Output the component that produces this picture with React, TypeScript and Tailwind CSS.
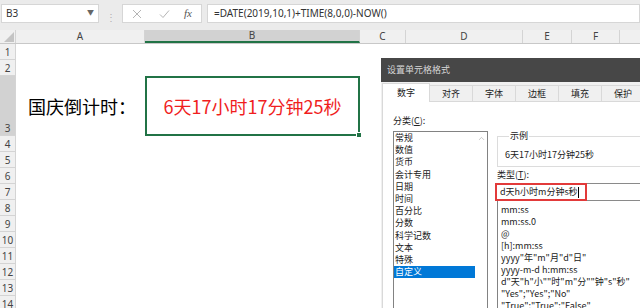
import { ChevronUp } from 'lucide-react';

const columns = [
  { id: 'A', w: 'w-[129px]', active: false },
  { id: 'B', w: 'w-[215px]', active: true },
  { id: 'C', w: 'w-[46px]', active: false },
  { id: 'D', w: 'w-[117px]', active: false },
  { id: 'E', w: 'w-[49px]', active: false },
  { id: 'F', w: 'w-[48px]', active: false },
  { id: 'G', w: 'w-[60px]', active: false },
];

const rowNums = [4, 5, 6, 7, 8, 9, 10, 11, 12, 13, 14];

const categories = ['常规', '数值', '货币', '会计专用', '日期', '时间', '百分比', '分数', '科学记数', '文本', '特殊', '自定义'];

const formats = [
  'mm:ss',
  'mm:ss.0',
  '@',
  '[h]:mm:ss',
  'yyyy"年"m"月"d"日"',
  'yyyy-m-d h:mm:ss',
  'd"天"h"小""时"m"分""钟"s"秒"',
  '"Yes";"Yes";"No"',
  '"True";"True";"False"',
];

const tabs = ['对齐', '字体', '边框', '填充', '保护'];

function RowHead({ n, active }: { n: number; active?: boolean }) {
  return (
    <div
      className={`w-[16px] shrink-0 flex items-end justify-center pb-[1px] text-[10px] leading-[12px] text-[#444] border-r border-b border-[#d4d4d4] ${
        active ? 'bg-[#d2d2d2]' : 'bg-[#f0f0f0]'
      }`}
    >
      {n}
    </div>
  );
}

export default function App() {
  return (
    <div className="relative w-[640px] h-[308px] overflow-hidden bg-white font-['Noto_Sans','Noto_Sans_CJK_SC',sans-serif]">
      {/* formula bar */}
      <div className="h-[30px] bg-[#ebebeb] pt-[4px] flex">
        <div className="ml-[1px] w-[98px] h-[19px] bg-white border border-[#d6d6d6] flex items-center justify-between pl-[4px] pr-[4px]">
          <span className="text-[10px] text-[#333]">B3</span>
          <span className="text-[7px] text-[#666]">▼</span>
        </div>
        <div className="w-[23px] flex items-center justify-center text-[10px] text-[#b0b0b0]">⋮</div>
        <div className="w-[80px] h-[19px] bg-white border border-[#d6d6d6] flex items-center">
          <svg width="10" height="10" viewBox="0 0 10 10" className="ml-[9px]">
            <path d="M1 1 L9 9 M9 1 L1 9" stroke="#b5b5b5" strokeWidth="1" />
          </svg>
          <svg width="11" height="10" viewBox="0 0 11 10" className="ml-[17px]">
            <path d="M1 5.5 L4 8.5 L10 1.5" stroke="#b5b5b5" strokeWidth="1" fill="none" />
          </svg>
          <span className="ml-[14px] text-[11px] italic text-[#555] font-['Liberation_Serif',serif]">fx</span>
        </div>
        <div className="ml-[5px] flex-1 h-[19px] bg-white border border-[#d6d6d6] flex items-center pl-[6px]">
          <span className="text-[10px] text-[#333]">=DATE(2019,10,1)+TIME(8,0,0)-NOW()</span>
        </div>
      </div>

      {/* column headers */}
      <div className="h-[14px] flex bg-[#f0f0f0] border-b border-[#c8c8c8]">
        <div className="w-[16px] shrink-0 border-r border-[#d4d4d4] flex items-end justify-end">
          <svg width="12" height="12" viewBox="0 0 12 12">
            <polygon points="11,1 11,11 1,11" fill="#c4c4c4" />
          </svg>
        </div>
        {columns.map((c) => (
          <div
            key={c.id}
            className={`${c.w} shrink-0 flex items-center justify-center text-[10px] text-[#444] border-r border-[#d4d4d4] ${
              c.active ? 'bg-[#d2d2d2] border-b-2 border-b-[#217346]' : ''
            }`}
          >
            {c.id}
          </div>
        ))}
      </div>

      {/* rows */}
      <div className="flex h-[16px]">
        <RowHead n={1} />
      </div>
      <div className="flex h-[16px]">
        <RowHead n={2} />
      </div>
      <div className="flex h-[60px]">
        <RowHead n={3} active />
        <div className="w-[129px] shrink-0 flex items-center pl-[12px] text-[18px] text-black font-['Noto_Sans_CJK_SC',sans-serif]">
          国庆倒计时：
        </div>
        <div className="relative w-[215px] shrink-0 border-2 border-[#217346] flex items-center justify-center text-[18px] text-[#f01e1e] font-['Noto_Sans_CJK_SC',sans-serif]">
          6天17小时17分钟25秒
          <div className="absolute -right-[4px] -bottom-[4px] w-[6px] h-[6px] bg-[#217346] border border-white" />
        </div>
      </div>
      {rowNums.map((n) => (
        <div key={n} className="flex h-[16px]">
          <RowHead n={n} />
        </div>
      ))}

      {/* format cells dialog */}
      <div className="absolute left-[381px] top-[58px] w-[270px] h-[260px] bg-[#f0f0f0] font-['Noto_Sans_CJK_SC',sans-serif] text-[9px] text-[#222]">
        <div className="h-[24px] bg-[#474747] flex items-center pl-[6px] text-[#d8d8d8]">设置单元格格式</div>
        <div className="pt-[1px] pl-[1px]">
          <div className="h-[19px] flex items-end">
            <div className="w-[48px] h-[19px] bg-white border-l border-t border-r border-[#d9d9d9] flex items-center justify-center">
              数字
            </div>
            {tabs.map((t) => (
              <div
                key={t}
                className="w-[43px] h-[17px] border-t border-r border-b border-[#d9d9d9] bg-[#f0f0f0] flex items-center justify-center"
              >
                {t}
              </div>
            ))}
          </div>
          <div className="h-[220px] bg-white border-l border-[#d9d9d9] flex pl-[10px] pt-[13px]">
            <div className="w-[95px] shrink-0">
              <div className="leading-[12px]">
                分类(<span className="underline">C</span>):
              </div>
              <div className="mt-[4px] h-[200px] border border-[#828282] flex">
                <div className="flex-1">
                  {categories.map((c) => (
                    <div
                      key={c}
                      className={`h-[12.2px] leading-[12.2px] pl-[1px] ${c === '自定义' ? 'bg-[#0078d7] text-white' : ''}`}
                    >
                      {c}
                    </div>
                  ))}
                </div>
                <div className="w-[12px] flex justify-center pt-[2px]">
                  <ChevronUp size={9} color="#a0a0a0" strokeWidth={1.5} />
                </div>
              </div>
            </div>
            <div className="ml-[7px] flex-1 pt-[15px]">
              <fieldset className="ml-[2px] border border-[#dcdcdc] pl-[7px] pb-[5px]">
                <legend className="ml-[4px] px-[1px] leading-[12px]">示例</legend>
                <div className="pt-[7px] leading-[12px]">6天17小时17分钟25秒</div>
              </fieldset>
              <div className="mt-[2px] ml-[2px] leading-[12px]">
                类型(<span className="underline">T</span>):
              </div>
              <div className="relative mt-[2px] h-[18px] border border-[#8a8a8a] flex items-center pl-[4px]">
                <span className="leading-[12px]">d天h小时m分钟s秒</span>
                <span className="w-[1px] h-[11px] bg-black" />
                <div className="absolute -left-[1px] -top-[1px] w-[92px] h-[18px] border-2 border-[#e23a3a]" />
              </div>
              <div className="ml-[2px] h-[120px] border border-t-0 border-[#828282] pt-[3px] pl-[3px]">
                {formats.map((f) => (
                  <div key={f} className="leading-[12px] whitespace-nowrap">
                    {f}
                  </div>
                ))}
              </div>
            </div>
          </div>
        </div>
      </div>
    </div>
  );
}
